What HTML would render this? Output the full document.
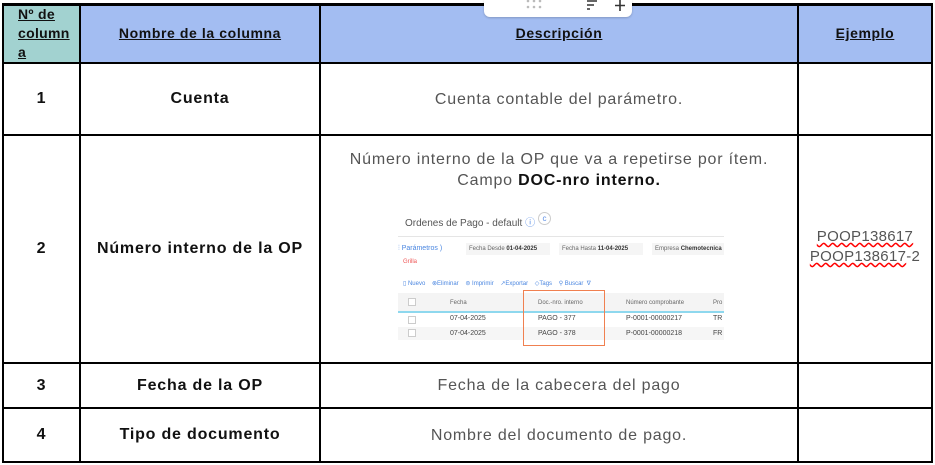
<!DOCTYPE html>
<html><head><meta charset="utf-8"><style>
*{margin:0;padding:0;box-sizing:border-box}
body{width:935px;height:465px;background:#fff;position:relative;overflow:hidden;font-family:"Liberation Sans",sans-serif}
.a{position:absolute}
.h{background:#000}
.c{position:absolute;display:flex;align-items:center;justify-content:center;text-align:center}
.hd{font-size:14px;font-weight:bold;text-decoration:underline;color:#111;letter-spacing:0.6px}
.b{font-size:16px;font-weight:bold;color:#111;letter-spacing:0.8px}
.d{font-size:16px;color:#555;line-height:21px;letter-spacing:0.8px}
.s{font-size:6px;color:#666}
</style></head><body>
<div class="a" style="left:2px;top:4px;width:78px;height:59px;background:#a2d2d0"></div>
<div class="a" style="left:80px;top:4px;width:853px;height:59px;background:#a3bdf2"></div>
<div class="a h" style="left:2px;top:3px;width:931px;height:3px"></div>
<div class="a h" style="left:2px;top:62px;width:931px;height:2px"></div>
<div class="a h" style="left:2px;top:134px;width:931px;height:2px"></div>
<div class="a h" style="left:2px;top:362px;width:931px;height:2px"></div>
<div class="a h" style="left:2px;top:407px;width:931px;height:2px"></div>
<div class="a h" style="left:2px;top:461px;width:931px;height:2px"></div>
<div class="a h" style="left:2px;top:3px;width:2px;height:460px"></div>
<div class="a h" style="left:79px;top:3px;width:2px;height:460px"></div>
<div class="a h" style="left:319px;top:3px;width:2px;height:460px"></div>
<div class="a h" style="left:797px;top:3px;width:2px;height:460px"></div>
<div class="a h" style="left:931px;top:3px;width:2px;height:460px"></div>
<div class="a" style="left:484px;top:0;width:148px;height:17px;background:#fff;border-radius:0 0 6px 6px;box-shadow:0 1px 2px rgba(0,0,0,.2)">
 <svg width="148" height="17" style="position:absolute;left:0;top:0"><g fill="#bbb"><circle cx="44" cy="1" r="1.3"/><circle cx="50" cy="1" r="1.3"/><circle cx="56" cy="1" r="1.3"/><circle cx="44" cy="7" r="1.3"/><circle cx="50" cy="7" r="1.3"/><circle cx="56" cy="7" r="1.3"/></g><g stroke="#333" stroke-width="1.6"><path d="M103 1H113M103 5H110M103 9H106"/><path d="M136 0V11M131 5.5H141"/></g></svg>
</div>
<div class="c hd" style="left:4px;top:4px;width:75px;height:58px;justify-content:flex-start;padding-left:14px;text-align:left;line-height:19px;letter-spacing:0.3px">Nº de<br>column<br>a</div>
<div class="c hd" style="left:81px;top:4px;width:238px;height:58px">Nombre de la columna</div>
<div class="c hd" style="left:321px;top:4px;width:476px;height:58px">Descripción</div>
<div class="c hd" style="left:799px;top:4px;width:132px;height:58px">Ejemplo</div>
<div class="c b" style="left:4px;top:64px;width:75px;height:70px">1</div>
<div class="c b" style="left:81px;top:64px;width:238px;height:70px">Cuenta</div>
<div class="c d" style="left:321px;top:64px;width:476px;height:70px">Cuenta contable del parámetro.</div>
<div class="c b" style="left:4px;top:136px;width:75px;height:226px">2</div>
<div class="c b" style="left:81px;top:136px;width:238px;height:226px">Número interno de la OP</div>
<div class="a d" style="left:321px;top:149px;width:476px;text-align:center">Número interno de la OP que va a repetirse por ítem.<br>Campo <b style="color:#111">DOC-nro interno.</b></div>
<div class="a d" style="left:799px;top:227px;width:132px;text-align:center;font-size:15px;line-height:20px;letter-spacing:0.3px"><span style="text-decoration:underline wavy red">POOP138617</span><br><span style="text-decoration:underline wavy red">POOP138617</span>-2</div>
<div class="a" style="left:398px;top:205px;width:326px;height:142px;font-size:7px;color:#444">
 <div class="a" style="left:7px;top:9px;font-size:10px;color:#555">Ordenes de Pago - default <span style="color:#5b8ee6">ⓘ</span></div>
 <div class="a" style="left:140px;top:7px;width:13px;height:13px;border:1px solid #ccc;border-radius:50%;color:#5b8ee6;font-size:8px;text-align:center;line-height:11px">c</div>
 <div class="a" style="left:0;top:31px;width:326px;height:1px;background:#e5e5e5"></div>
 <div class="a" style="left:0;top:40px;color:#4a86e0;font-size:7px">⫶ Parámetros )</div>
 <div class="a s" style="left:68px;top:38px;width:84px;height:12px;background:#f5f5f5;padding:3px">Fecha Desde <b style="color:#333">01-04-2025</b></div>
 <div class="a s" style="left:161px;top:38px;width:84px;height:12px;background:#f5f5f5;padding:3px">Fecha Hasta <b style="color:#333">11-04-2025</b></div>
 <div class="a s" style="left:254px;top:38px;width:72px;height:12px;background:#f5f5f5;padding:3px;white-space:nowrap;overflow:hidden">Empresa <b style="color:#333">Chemotecnica</b></div>
 <div class="a" style="left:5px;top:54px;color:#e55;font-size:6px">Grilla</div>
 <div class="a" style="left:5px;top:75px;color:#4a86e0;font-size:6px;white-space:nowrap">▯ Nuevo &nbsp;&nbsp; ⊗Eliminar &nbsp;&nbsp; ⊜ Imprimir &nbsp;&nbsp; ↗Exportar &nbsp;&nbsp; ◇Tags &nbsp;&nbsp; ⚲ Buscar &nbsp;∇</div>
 <div class="a" style="left:0;top:88px;width:326px;height:20px;background:#f4f4f4;border-bottom:2px solid #8ed8ee"></div>
 <div class="a s" style="left:52px;top:95px">Fecha</div>
 <div class="a s" style="left:140px;top:95px">Doc.-nro. interno</div>
 <div class="a s" style="left:228px;top:95px">Número comprobante</div>
 <div class="a s" style="left:315px;top:95px">Pro</div>
 <div class="a" style="left:0;top:122px;width:326px;height:13px;background:#f6f6f6"></div>
 <div class="a" style="left:10px;top:93px;width:8px;height:8px;border:1px solid #ccc;background:#fff"></div>
 <div class="a" style="left:10px;top:111px;width:8px;height:8px;border:1px solid #ccc"></div>
 <div class="a" style="left:10px;top:124px;width:8px;height:8px;border:1px solid #ccc;background:#fff"></div>
 <div class="a" style="left:52px;top:110px">07-04-2025</div><div class="a" style="left:140px;top:110px">PAGO - 377</div><div class="a" style="left:228px;top:110px">P-0001-00000217</div><div class="a" style="left:315px;top:110px">TR</div>
 <div class="a" style="left:52px;top:125px">07-04-2025</div><div class="a" style="left:140px;top:125px">PAGO - 378</div><div class="a" style="left:228px;top:125px">P-0001-00000218</div><div class="a" style="left:315px;top:125px">FR</div>
 <div class="a" style="left:125px;top:85px;width:82px;height:56px;border:1.5px solid #f08050"></div>
</div>
<div class="c b" style="left:4px;top:364px;width:75px;height:43px">3</div>
<div class="c b" style="left:81px;top:364px;width:238px;height:43px">Fecha de la OP</div>
<div class="c d" style="left:321px;top:364px;width:476px;height:43px">Fecha de la cabecera del pago</div>
<div class="c b" style="left:4px;top:409px;width:75px;height:52px">4</div>
<div class="c b" style="left:81px;top:409px;width:238px;height:52px">Tipo de documento</div>
<div class="c d" style="left:321px;top:409px;width:476px;height:52px">Nombre del documento de pago.</div>
</body></html>
